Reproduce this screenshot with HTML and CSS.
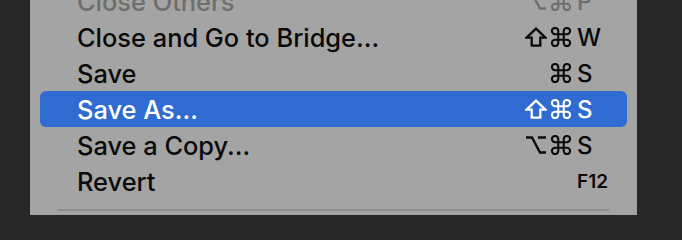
FILE: index.html
```html
<!DOCTYPE html>
<html>
<head>
<meta charset="utf-8">
<link rel="stylesheet" href="styles.css">
</head>
<body>
<div class="menu">
  <div class="item disabled"><span class="label">Close Others</span><span class="sc"><span class="mods"><svg class="ic" viewBox="0 0 22 20"><path d="M1 2.5 H7 L15 17.5 H21 M13 2.5 H21"/></svg><svg class="ic" viewBox="0 0 22 22"><path d="M8 4.5 A3.5 3.5 0 1 0 4.5 8 H17.5 A3.5 3.5 0 1 0 14 4.5 V17.5 A3.5 3.5 0 1 0 17.5 14 H4.5 A3.5 3.5 0 1 0 8 17.5 Z"/></svg></span><span class="key">P</span></span></div>
  <div class="item"><span class="label">Close and Go to Bridge...</span><span class="sc"><span class="mods"><svg class="ic" viewBox="0 0 22 20"><path d="M11 1.6 L20.4 10.6 H15.3 V18.6 H6.7 V10.6 H1.6 Z"/></svg><svg class="ic" viewBox="0 0 22 22"><path d="M8 4.5 A3.5 3.5 0 1 0 4.5 8 H17.5 A3.5 3.5 0 1 0 14 4.5 V17.5 A3.5 3.5 0 1 0 17.5 14 H4.5 A3.5 3.5 0 1 0 8 17.5 Z"/></svg></span><span class="key">W</span></span></div>
  <div class="item"><span class="label">Save</span><span class="sc"><span class="mods"><svg class="ic" viewBox="0 0 22 22"><path d="M8 4.5 A3.5 3.5 0 1 0 4.5 8 H17.5 A3.5 3.5 0 1 0 14 4.5 V17.5 A3.5 3.5 0 1 0 17.5 14 H4.5 A3.5 3.5 0 1 0 8 17.5 Z"/></svg></span><span class="key">S</span></span></div>
  <div class="item active"><span class="label">Save As...</span><span class="sc"><span class="mods"><svg class="ic" viewBox="0 0 22 20"><path d="M11 1.6 L20.4 10.6 H15.3 V18.6 H6.7 V10.6 H1.6 Z"/></svg><svg class="ic" viewBox="0 0 22 22"><path d="M8 4.5 A3.5 3.5 0 1 0 4.5 8 H17.5 A3.5 3.5 0 1 0 14 4.5 V17.5 A3.5 3.5 0 1 0 17.5 14 H4.5 A3.5 3.5 0 1 0 8 17.5 Z"/></svg></span><span class="key">S</span></span></div>
  <div class="item"><span class="label">Save a Copy...</span><span class="sc"><span class="mods"><svg class="ic" viewBox="0 0 22 20"><path d="M1 2.5 H7 L15 17.5 H21 M13 2.5 H21"/></svg><svg class="ic" viewBox="0 0 22 22"><path d="M8 4.5 A3.5 3.5 0 1 0 4.5 8 H17.5 A3.5 3.5 0 1 0 14 4.5 V17.5 A3.5 3.5 0 1 0 17.5 14 H4.5 A3.5 3.5 0 1 0 8 17.5 Z"/></svg></span><span class="key">S</span></span></div>
  <div class="item"><span class="label">Revert</span><span class="sc"><span class="mods"></span><span class="key fkey">F12</span></span></div>
  <div class="sep"></div>
</div>
</body>
</html>
```
FILE: styles.css
```css
html, body {
  margin: 0;
  padding: 0;
  background: #272727;
  height: 215px;
  overflow: hidden;
}
.menu {
  margin: -17px 0 0 30px;
  width: 607px;
  background: #a4a4a4;
  padding: 0 10px 30px;
  box-sizing: border-box;
  font-family: Inter, "Liberation Sans", sans-serif;
  color: #0a0a0a;
}
.item {
  height: 36px;
  display: flex;
  align-items: center;
  justify-content: space-between;
  padding: 0 19px 0 37px;
  border-radius: 6px;
  font-size: 25.4px;
  font-weight: 500;
}
.item.active {
  background: #2f6bd0;
  color: #ffffff;
}
.item.disabled {
  color: #6e6e6e;
}
.sc {
  display: flex;
  align-items: center;
  gap: 5px;
}
.mods {
  display: flex;
  align-items: center;
  gap: 3px;
}
.ic {
  width: 22px;
  height: 20px;
  fill: none;
  stroke: currentColor;
  stroke-width: 2.3;
  stroke-linejoin: miter;
}
.key {
  width: 31px;
  text-align: left;
  font-size: 24px;
}
.key.fkey {
  font-size: 19px;
  font-weight: 600;
}
.sep {
  height: 2px;
  background: #8c8c8c;
  margin: 10px 18px 0;
}
```
